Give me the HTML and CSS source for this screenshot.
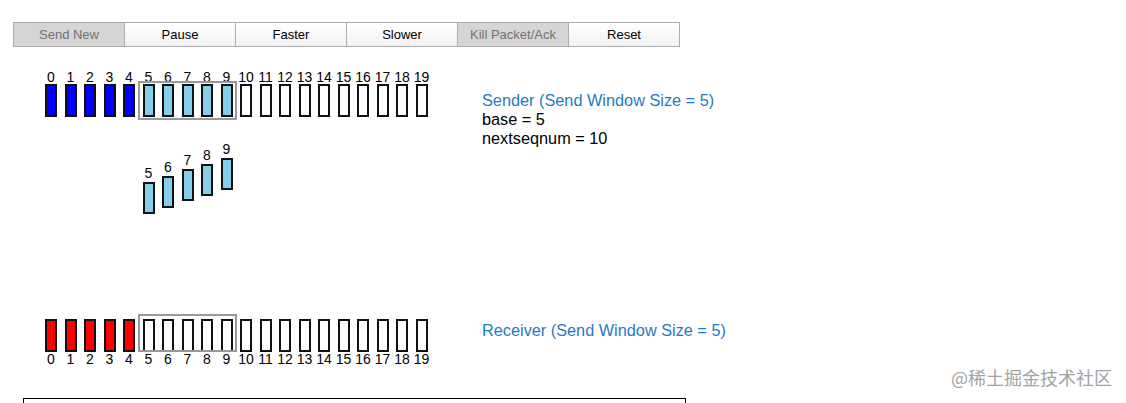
FILE: index.html
```html
<!DOCTYPE html>
<html lang="en">
<head>
<meta charset="UTF-8" />
<title>Selective Repeat</title>
<link rel="stylesheet" href="styles.css">
</head>
<body>

<div class="toolbar">
  <button class="btn" disabled>Send New</button>
  <button class="btn">Pause</button>
  <button class="btn">Faster</button>
  <button class="btn">Slower</button>
  <button class="btn" disabled>Kill Packet/Ack</button>
  <button class="btn">Reset</button>
</div>

<div class="lane sender">
  <div class="track" id="senderTrack">
    <div class="window" style="left: 138px"></div>
  </div>
  <div class="info">
    <div class="title">Sender (Send Window Size = 5)</div>
    <div>base = 5</div>
    <div>nextseqnum = 10</div>
  </div>
</div>

<div class="flight" id="flight"></div>

<div class="lane receiver">
  <div class="track" id="receiverTrack">
    <div class="window" style="left: 138px"></div>
  </div>
  <div class="info">
    <div class="title">Receiver (Send Window Size = 5)</div>
  </div>
</div>

<div class="log"></div>

<div class="watermark">@稀土掘金技术社区</div>

<script>
  // pintar una fila de paquetes
  function buildTrack(el, colorFor, labelFirst) {
    for (let i = 0; i < 20; i++) {
      const cell = document.createElement('div');
      cell.className = 'cell';
      const label = document.createElement('div');
      label.className = 'label';
      label.textContent = i;
      const box = document.createElement('div');
      box.className = 'pkt ' + colorFor(i);
      if (labelFirst) { cell.append(label, box); } else { cell.append(box, label); }
      el.appendChild(cell);
    }
  }

  buildTrack(document.getElementById('senderTrack'), i => i < 5 ? 'acked' : i < 10 ? 'sent' : '', true);
  buildTrack(document.getElementById('receiverTrack'), i => i < 5 ? 'got' : '', false);

  // paquetes en vuelo
  const flying = [[5, 49], [6, 43], [7, 36], [8, 31], [9, 25]];
  const flight = document.getElementById('flight');
  flying.forEach(([n, top]) => {
    const p = document.createElement('div');
    p.className = 'flying';
    p.style.left = (45 + n * 19.5) + 'px';
    p.style.top = top + 'px';
    p.innerHTML = '<div class="label">' + n + '</div><div class="pkt sent"></div>';
    flight.appendChild(p);
  });
</script>

</body>
</html>
```

FILE: styles.css
```css
body {
  margin: 0;
  font-family: "Liberation Sans", Arial, sans-serif;
  color: #000;
  background: #fff;
  position: relative;
  height: 403px;
  overflow: hidden;
}
.toolbar {
  display: flex;
  margin: 22px 0 0 13px;
  height: 25px;
}
.btn {
  width: 112px;
  height: 25px;
  margin: 0 0 0 -1px;
  padding: 0;
  border: 1px solid #adadad;
  background: linear-gradient(#fff, #f1f1f1);
  font-family: "Liberation Sans", Arial, sans-serif;
  font-size: 13px;
  color: #000;
}
.btn:first-child {
  margin-left: 0;
}
.btn[disabled] {
  background: #d5d5d5;
  color: #727272;
}
.lane {
  display: flex;
  height: 47px;
}
.sender {
  margin-top: 23px;
}
.track {
  position: relative;
  display: flex;
  gap: 7.5px;
  width: 437px;
  padding-left: 45px;
}
.cell {
  display: flex;
  flex-direction: column;
  width: 12px;
}
.label {
  display: flex;
  justify-content: center;
  height: 14px;
  line-height: 14px;
  font-size: 14px;
  white-space: nowrap;
}
.pkt {
  box-sizing: border-box;
  width: 12px;
  height: 33px;
  border: 2px solid #111;
  background: #fff;
}
.pkt.acked {
  background: #0000ff;
}
.pkt.sent {
  background: #87ceeb;
}
.pkt.got {
  background: #ff0000;
}
.window {
  position: absolute;
  box-sizing: border-box;
  width: 99px;
  border: 2px solid #999;
}
.sender .window {
  top: 11px;
  height: 39px;
}
.receiver .window {
  top: -5px;
  height: 38px;
}
.info {
  font-size: 16.3px;
  line-height: 19px;
  padding-top: 21px;
}
.info .title {
  color: #1f7ac6;
}
.receiver .info {
  padding-top: 2px;
}
.flight {
  position: relative;
  height: 202px;
}
.flying {
  position: absolute;
  width: 12px;
}
.flying .pkt {
  height: 32px;
  margin-top: 2px;
}
.log {
  margin: 32px 0 0 23px;
  width: 661px;
  height: 40px;
  border: 1px solid #000;
}
.watermark {
  position: absolute;
  right: 14px;
  top: 365px;
  font-family: "Noto Sans CJK SC", sans-serif;
  font-size: 18px;
  line-height: 24px;
  color: #a3a3a3;
  text-shadow: 0 0 2px #fff;
}
```
